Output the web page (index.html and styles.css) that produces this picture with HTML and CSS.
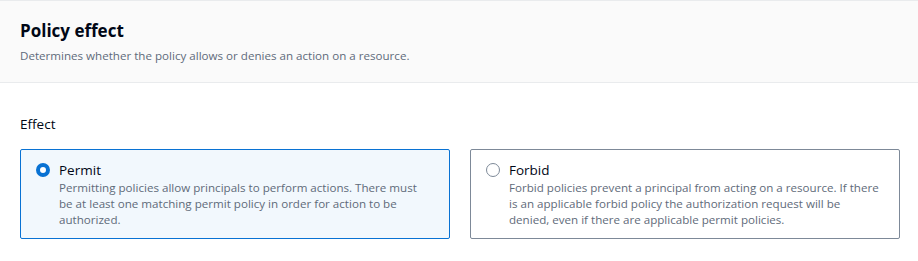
FILE: index.html
```html
<!DOCTYPE html>
<html>
  <head>
    <link rel="stylesheet" href="styles.css">
  </head>
  <body>
    <div class="container">
      <div class="container-header">
        <h2 class="header-title">Policy effect</h2>
        <p class="header-desc">Determines whether the policy allows or denies an action on a resource.</p>
      </div>
      <div class="container-content">
        <div class="field-label">Effect</div>
        <div class="tiles">
          <label class="tile tile-selected">
            <span class="radio radio-checked"></span>
            <span class="tile-text">
              <span class="tile-label">Permit</span>
              <span class="tile-desc">Permitting policies allow principals to perform actions. There must be at least one matching permit policy in order for action to be authorized.</span>
            </span>
          </label>
          <label class="tile">
            <span class="radio"></span>
            <span class="tile-text">
              <span class="tile-label">Forbid</span>
              <span class="tile-desc">Forbid policies prevent a principal from acting on a resource. If there is an applicable forbid policy the authorization request will be denied, even if there are applicable permit policies.</span>
            </span>
          </label>
        </div>
      </div>
    </div>
  </body>
</html>
```

FILE: styles.css
```css
* {
  box-sizing: border-box;
}

body {
  margin: 0;
  font-family: 'Open Sans', sans-serif;
  color: #000716;
  background: white;
}

.container-header {
  background: #fafafa;
  border-top: 1px solid #e9ebed;
  border-bottom: 1px solid #e9ebed;
  padding: 18px 20px 18px;
  height: 83px;
}

.header-title {
  margin: 0;
  font-size: 17px;
  line-height: 24px;
  font-weight: 700;
}

.header-desc {
  margin: 5px 0 0;
  font-size: 11.6px;
  line-height: 16px;
  color: #5f6b7a;
}

.container-content {
  padding: 31px 18px 20px 20px;
}

.field-label {
  font-size: 13.5px;
  line-height: 20px;
  margin-bottom: 15px;
}

.tiles {
  display: grid;
  grid-template-columns: 1fr 1fr;
  gap: 20px;
}

.tile {
  display: flex;
  gap: 9px;
  align-items: flex-start;
  padding: 10px 16px 10px 15px;
  border: 1px solid #7d8998;
  border-radius: 2px;
  background: white;
}

.tile-selected {
  border-color: #0972d3;
  background: #f2f8fd;
}

.radio {
  flex: none;
  width: 14px;
  height: 14px;
  margin-top: 3px;
  border-radius: 50%;
  border: 1.5px solid #7d8998;
  background: white;
}

.radio-checked {
  border: 4px solid #0972d3;
}

.tile-text {
  display: flex;
  flex-direction: column;
}

.tile-label {
  font-size: 13.5px;
  line-height: 20px;
}

.tile-desc {
  font-size: 11.6px;
  line-height: 16px;
  color: #5f6b7a;
}
```
